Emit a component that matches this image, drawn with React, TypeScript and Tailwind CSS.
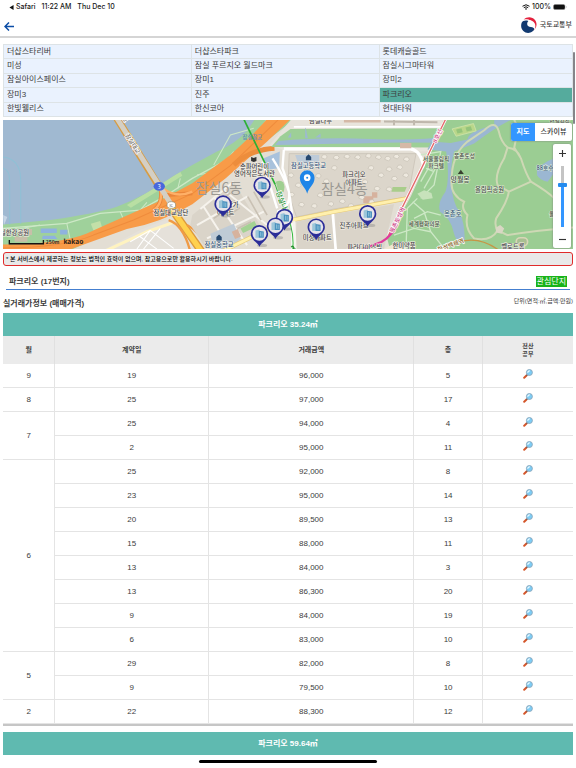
import React from "react";

const complexes = [
  "더샵스타리버", "더샵스타파크", "롯데캐슬골드",
  "미성", "잠실 푸르지오 월드마크", "잠실시그마타워",
  "잠실아이스페이스", "장미1", "장미2",
  "장미3", "진주", "파크리오",
  "한빛웰리스", "한신코아", "현대타워",
];

type Deal = { day: number; price: string; floor: number };

const months: { month: number; deals: Deal[] }[] = [
  { month: 9, deals: [{ day: 19, price: "96,000", floor: 5 }] },
  { month: 8, deals: [{ day: 25, price: "97,000", floor: 17 }] },
  {
    month: 7,
    deals: [
      { day: 25, price: "94,000", floor: 4 },
      { day: 2, price: "95,000", floor: 11 },
    ],
  },
  {
    month: 6,
    deals: [
      { day: 25, price: "92,000", floor: 8 },
      { day: 23, price: "95,000", floor: 14 },
      { day: 20, price: "89,500", floor: 13 },
      { day: 15, price: "88,000", floor: 11 },
      { day: 13, price: "84,000", floor: 3 },
      { day: 13, price: "86,300", floor: 20 },
      { day: 9, price: "84,000", floor: 19 },
      { day: 6, price: "83,000", floor: 10 },
    ],
  },
  {
    month: 5,
    deals: [
      { day: 29, price: "82,000", floor: 8 },
      { day: 9, price: "79,500", floor: 10 },
    ],
  },
  { month: 2, deals: [{ day: 22, price: "88,300", floor: 12 }] },
];

function Magnifier() {
  return (
    <svg viewBox="0 0 20 20" className="h-[10px] w-[10px]" aria-hidden="true">
      <path d="M2.4 17.6 7 13" stroke="#d4562a" strokeWidth="4" strokeLinecap="round" />
      <path d="M7 13 9 11" stroke="#4a5a6a" strokeWidth="2.6" />
      <circle cx="12.8" cy="7" r="6" fill="#7ccdf6" stroke="#8ba6ba" strokeWidth="1.8" />
      <path d="M9.6 7.4a3.8 3.8 0 0 1 4-3.8" stroke="#f2fbff" strokeWidth="2.4" fill="none" />
    </svg>
  );
}

function GovLogo() {
  return (
    <svg viewBox="0 0 48 48" className="h-4 w-4" aria-hidden="true">
      <path d="M8 8C18-2 34-1 42 9c8 11 5 24-5 32 4-7 5-17 0-23-7-10-19-13-29-10Z" fill="#e4213d" />
      <path d="M12 9c12-3 24 1 29 10 4 7 2 16-2 21 1-8-1-13-6-15Z" fill="#fff" />
      <path d="M2 17C5 11 14 9 22 12c-4 4-5 10-1 15 5 5 12 2 17 6 3 3 1 7-3 10-9 7-21 6-28-1C0 35-1 26 2 17Z" fill="#123a70" />
    </svg>
  );
}

function MapPin({ x, y }: { x: number; y: number }) {
  return (
    <g transform={`translate(${x} ${y})`}>
      <ellipse cx="8" cy="34" rx="15" ry="5" fill="#777" opacity=".35" />
      <path d="M0 38C-5 25-26 18-26-1a26 26 0 0 1 52 0C26 18 5 25 0 38Z" fill="#2b2d98" />
      <circle r="21" cy="-1" fill="#e6e4ea" />
      <path d="M-12-11 0-14v25h-12Z" fill="#9cc6da" />
      <path d="m-2-10 15 2v19H-2Z" fill="#4a90bd" />
      <path d="M3-6v13M8-5V8" stroke="#a4d4e5" strokeWidth="2" />
    </g>
  );
}

const houses = [
  [970, 125], [1006, 127], [1038, 124], [1070, 126], [1102, 122], [1132, 126],
  [1000, 158], [1160, 130], [1186, 124], [1216, 132], [1164, 162], [1196, 156],
  [1180, 190], [1214, 180], [870, 180], [892, 210], [872, 238], [902, 268],
  [952, 182], [976, 198], [958, 240], [990, 266], [1024, 258], [1050, 272],
  [1082, 246], [1112, 260], [1128, 220], [1140, 180], [1110, 158], [1164, 222],
  [940, 272], [918, 168], [1092, 200],
];

function MapDrawing() {
  return (
    <svg
      viewBox="9 15 1707 387"
      preserveAspectRatio="xMidYMid slice"
      className="block h-[129px] w-full font-['Noto_Sans_CJK_KR',sans-serif]"
      role="img"
      aria-label="잠실 지도"
    >
      <rect x="0" y="0" width="1730" height="410" fill="#e3ded4" />

      {/* riverside park */}
      <path d="M0 320 250 290 350 265 480 205 600 120 760 0H900L600 230 200 410H0Z" fill="#9fd19b" />
      <path d="M380 270 540 170 546 182 392 278Z" fill="#b9dfa3" />
      {/* river */}
      <path d="M0 0H772L738 50Q700 90 650 110L576 150 520 182Q430 245 350 275 290 295 150 315L0 329Z" fill="#a0b9d1" />
      <path d="M9 126q53 6 53 70v130M9 160q20 4 20 40v128" fill="none" stroke="#8fc0d5" strokeWidth="3" />
      <path d="M9 300 22 306 12 330" fill="#c5d5e5" />
      <path d="M9 340 200 325 300 295 420 285 500 240 576 190 660 145 730 100 800 15" fill="none" stroke="#cde8c6" strokeWidth="4" />
      <path d="M0 352 120 330M200 325 210 372M360 290 372 318M420 285 440 262M540 190 532 222M640 150 690 60 760 40M590 180 650 170 700 110" fill="none" stroke="#cde8c6" strokeWidth="3" />
      <path d="M122 340h48v14h-48ZM180 344h22v14h-22ZM128 362h36l8 10h-46Z" fill="#8fb2df" />
      <path d="M272 326 300 318 306 338 280 346Z" fill="#c3e0a8" />
      <path d="M56 342h40v18H56ZM44 364h38v16H44Z" fill="#c7bfa9" />

      {/* city blocks south of the expressway */}
      <path d="M300 410 420 345 530 300 610 410Z" fill="#e5e1da" />
      <path d="M310 410 440 350 520 322" fill="none" stroke="#fff3c0" strokeWidth="9" />
      <path d="M390 380 450 346 520 400M420 365 470 402M450 346 410 402M480 340 430 402" stroke="#fff" strokeWidth="3" fill="none" />

      {/* expressway */}
      <path d="M0 388Q180 388 260 355 350 315 470 262L576 205 690 120 760 55 812 0H884L800 80 676 190 576 268Q480 325 380 342L190 410H0Z" fill="#f89b48" />
      <path d="M0 399Q190 398 280 360L400 315 576 236 690 152 840 8" fill="none" stroke="#ef8b3c" strokeWidth="3" />
      <path d="M480 215Q490 265 460 285M500 240 576 235" fill="none" stroke="#e9853a" strokeWidth="12" />
      <path d="M480 215Q490 265 460 285M490 222Q530 250 576 230" fill="none" stroke="#ffb067" strokeWidth="7" />
      <path d="M700 150Q750 104 822 100" fill="none" stroke="#ed8d3c" strokeWidth="15" />

      {/* bridge */}
      <path d="M350 10 480 220" stroke="#d79c42" strokeWidth="22" />
      <path d="M350 10 520 280" stroke="#d4cfc4" strokeWidth="15" />
      <path d="M510 275 604 410" stroke="#dd9a3a" strokeWidth="24" />
      <path d="M510 275 604 410" stroke="#ffd14f" strokeWidth="16" />
      <path d="M505 315Q550 330 570 410M560 330Q600 350 626 410" stroke="#f09a45" strokeWidth="7" fill="none" />

      {/* northern strip with stream */}
      <path d="M884 0H1340V110L860 108 828 98 806 92Z" fill="#e8e4dc" />
      <path d="M870 42 1340 40V98L812 96 840 64Z" fill="#9dcf97" />
      <path d="M834 78Q960 66 1110 72T1340 64V84Q1200 82 1120 84T824 90Z" fill="#9db9d2" />
      <path d="m862 68 10-16v16ZM914 70V32l8 38ZM944 68l16-12v12Z" fill="#9db9d2" />
      <path d="M850 102H1230Q1262 108 1270 160" fill="none" stroke="#fff" strokeWidth="10" />
      <path d="M880 36H1320" stroke="#fff" strokeWidth="5" />
      <path d="M1198 84h34v16h-34ZM1030 15h110v8h-110Z" fill="#d5b9a7" />
      <path d="M1150 20 1310 22M1180 15v16M1240 15v16" stroke="#bfb7ac" strokeWidth="6" />

      {/* residential blocks */}
      <path d="M866 116H1246L1222 245 1000 282 888 306 862 230Z" fill="#dcd6cb" stroke="#c5beb2" strokeWidth="2" />
      <path d="M884 120h72v34h-60Z" fill="#bdcbd9" />
      <path d="M790 130 838 110 836 160 798 164Z" fill="#a8c2dc" />
      <path d="M1088 244h30v20h-30ZM1114 232h16v16h-16Z" fill="#d6b29e" />
      <path d="M1176 216h42l-6 14h-40Z" fill="#a9cd8b" />
      {houses.map(([x, y]) => (
        <path key={`${x}-${y}`} d={`M${x - 8} ${y + 3}l4-8 9-1 5 7-6 7Z`} fill="#eee9df" stroke="#c6bfb3" strokeWidth="2" />
      ))}
      <path d="M576 300 700 200 790 350 650 410H624L570 330Z" fill="#dad4c9" />
      <path d="M640 245 740 390M610 275 690 400M670 225 800 330M590 330 740 245M620 370 790 290M700 200 600 282" stroke="#f6f3ed" strokeWidth="6" fill="none" />
      <path d="M650 262l40-28M664 284l40-28M678 306l40-28M760 230l40 70M742 245l40 70M712 340l40-20M640 310l30-20" stroke="#c9c1b4" strokeWidth="5" />
      <path d="M720 340 762 318 770 334 728 354Z" fill="#a3d293" />
      <path d="M630 356 700 326 720 370 690 402H640Z" fill="#bfcbd6" />
      <path d="M694 350 712 342 722 364 704 372Z" fill="#d6b29e" />
      <path d="M826 200Q850 190 852 216L850 230 834 232Z" fill="#a0cf91" />
      <path d="M816 130Q860 200 866 236 868 280 830 290M850 105 846 160Q866 210 876 310V410M786 140 830 280" fill="none" stroke="#fff" strokeWidth="7" />
      <path d="M888 320 1000 296V410H884ZM1004 296 1180 268 1148 410H1004Z" fill="#dad4c9" />
      <path d="M996 290 1006 410" stroke="#fff" strokeWidth="8" />
      <path d="M650 416 790 348 880 314 1000 290 1220 250" fill="none" stroke="#e5c978" strokeWidth="13" />
      <path d="M650 416 790 348 880 314 1000 290 1220 250" fill="none" stroke="#fff0ad" strokeWidth="9" />
      <path d="M880 318 884 410" stroke="#f6f3ed" strokeWidth="9" />

      {/* Olympic park */}
      <path d="M1334 0H1730V410H1170L1160 372 1230 245 1276 145Z" fill="#9bcd93" />
      <path d="M1292 80 1350 84 1400 74Q1400 50 1480 30V15H1530Q1480 40 1420 86L1360 110Q1348 150 1352 210 1356 265 1376 290 1392 320 1392 384 1366 386 1358 350 1350 310 1318 290 1308 265 1334 230 1348 190 1336 110L1280 104Z" fill="#9bb7d2" />
      <path d="M1608 160Q1650 130 1670 128V160L1640 200Q1616 196 1608 180Z" fill="#9bb7d2" />
      <path d="m1354 42 64-16 8 22-60 16Z" fill="#b9d78a" stroke="#d8e7b0" strokeWidth="2" />
      <path d="m1366 44 16-4 4 12-16 4ZM1394 38l16-4 4 12-16 4Z" fill="#94c47b" />
      <path d="M1352 200Q1352 120 1400 80L1450 46Q1484 12 1494 50 1500 80 1520 98 1550 100 1560 130 1576 180 1590 200 1640 230 1660 250M1520 98 1510 130Q1480 180 1490 210L1524 230 1590 200M1524 230Q1520 260 1486 310 1480 330 1490 346M1352 200Q1350 240 1390 260 1380 280 1400 300 1390 340 1420 370 1470 380 1490 346L1520 360Q1600 346 1730 336M1560 130 1540 98 1552 40 1540 15" fill="none" stroke="#ced8b5" strokeWidth="6" />
      <path d="M1236 260 1270 290 1290 350 1330 400M1250 250 1220 280 1216 400M1260 120 1320 110 1300 210 1260 250M1276 160 1300 170M1240 310 1280 290 1320 300M1180 360 1240 340 1290 350M1300 130 1260 200M1310 150 1270 220" fill="none" stroke="#cde8c6" strokeWidth="4" />
      <path d="m1250 236 20-10 22 8 4 16-30 4Z" fill="#c7e2bb" />
      <path d="m1484 338 14-8 12 10-8 16-16-4Z" fill="#d9d7c4" />
      <rect x="1546" y="368" width="34" height="24" rx="12" fill="#a9bf92" stroke="#d8d6b8" strokeWidth="5" />
      <path d="M1376 380Q1440 362 1500 410" fill="none" stroke="#c69645" strokeWidth="4" />
      <path d="M1152 400 1190 380 1230 410H1150Z" fill="#eee6d0" />

      {/* subway lines */}
      <path d="M1336 10 1218 250 1164 360" fill="none" stroke="#fff" strokeWidth="9" />
      <path d="M1336 10 1218 250 1164 360" fill="none" stroke="#e5686b" strokeWidth="4" />
      <path d="M1188 320Q1180 360 1140 382L1080 405" fill="none" stroke="#df3a9c" strokeWidth="7" />
      <path d="M724 0 824 208" stroke="#2bb135" strokeWidth="5" />
      <path d="M824 208 852 290Q884 340 876 410" stroke="#35b83e" strokeWidth="3" fill="none" />

      {/* district names */}
      <g fill="#9b9993" fontSize="42">
        <text x="586" y="233">잠실6동</text>
        <text x="962" y="238">잠실4동</text>
      </g>

      {/* places */}
      <g fill="#3f3f46" stroke="#f5f1e8" strokeWidth="3" paintOrder="stroke" fontSize="19" fontWeight="500" textAnchor="middle">
        <text x="87" y="360" textAnchor="end">잠실한강공원</text>
        <text x="512" y="301">잠실대교남단</text>
        <text x="762" y="161">송파어린이</text>
        <text x="762" y="184">영어작은도서관</text>
        <text x="680" y="276">미성상가</text>
        <text x="676" y="300">아파트</text>
        <text x="656" y="396" fill="#34577f">잠실중학교</text>
        <text x="924" y="158" fill="#34577f">잠실고등학교</text>
        <text x="1060" y="187">파크리오</text>
        <text x="1060" y="210">아파트</text>
        <text x="1060" y="340">진주아파트</text>
        <text x="950" y="374">미성아파트</text>
        <text x="1092" y="406">파라다이스빌</text>
        <text x="960" y="25">잠실나루</text>
        <text x="1210" y="400">한미약품</text>
        <text x="1536" y="402">벨로드롬</text>
      </g>
      <g fill="#3f4a40" stroke="#e4efd9" strokeWidth="3" paintOrder="stroke" fontSize="17" fontWeight="500" textAnchor="middle">
        <text x="1306" y="137">서울올림픽</text>
        <text x="1306" y="158">파크텔</text>
        <text x="1391" y="130">몽촌토성</text>
        <text x="1378" y="200" fontSize="21">망월봉</text>
        <text x="1466" y="232" fontSize="19">올림픽공원</text>
        <text x="1356" y="304" fontSize="19" fill="#34577f">몽촌호</text>
        <text x="1270" y="334">세계평화의문</text>
        <text x="1632" y="166" fill="#34577f">88호수</text>
        <text x="1676" y="302">올림픽홀</text>
        <text x="1676" y="24">한얼광장</text>
      </g>
      <g stroke="#fff" strokeWidth="4" paintOrder="stroke" fontSize="18" textAnchor="middle" fontWeight="500">
        <text transform="translate(392 90) rotate(58)" fill="#74706a">잠실대교</text>
        <text transform="translate(368 16) rotate(58)" fill="#74706a">교</text>
        <text transform="translate(840 268) rotate(68)" fill="#238f2d" fontSize="21">잠실나루</text>
        <text transform="translate(1196 318) rotate(-64)" fill="#c93482">몽촌토성역</text>
        <text transform="translate(1316 66) rotate(-64)" fill="#d2508c">8호선</text>
        <text transform="translate(1352 396) rotate(-20)" fill="#8c681f">한성백제역</text>
        <text x="756" y="72" fill="#648db8" stroke="none" fontSize="16">잠실철교</text>
      </g>
      <path d="M872 396q6-6 8 2-2 6 6 4" stroke="#238f2d" strokeWidth="4" fill="none" />
      <path d="m1380 164 9 13h-18Z" fill="#38402f" />
      <path d="m924 118 8 8v10h-16v-10ZM656 358l8 8v10h-16v-10Z" fill="#26486f" />
      <path d="m752 126 8 3 8-3v12l-8 3-8-3Z" fill="#333" />

      {/* route shields */}
      <ellipse cx="477" cy="214" rx="17" ry="13" fill="#4968dc" />
      <text x="477" y="221" fill="#fff" fontSize="18" textAnchor="middle">3</text>
      <ellipse cx="513" cy="270" rx="13" ry="10" fill="#fff" stroke="#8a8a72" strokeWidth="2" />
      <text x="513" y="275" fill="#555" fontSize="12" textAnchor="middle">IC</text>

      {/* complexes */}
      <MapPin x={785} y={212} />
      <MapPin x={668} y={268} />
      <MapPin x={852} y={308} />
      <MapPin x={825} y={334} />
      <MapPin x={777} y={357} />
      <MapPin x={947} y={337} />
      <MapPin x={1101} y={297} />
      <path d="M920 236C916 216 898 210 898 188a22 22 0 0 1 44 0c0 22-18 28-22 48Z" fill="#1e85e8" />
      <circle cx="920" cy="188" r="10" fill="#fff" />
      <circle cx="920" cy="188" r="3" fill="#1e85e8" />

      {/* scale bar */}
      <path d="M28 375V386H130V375" fill="none" stroke="#141414" strokeWidth="4" />
      <text x="137" y="386" fontSize="15" fontWeight="700" fill="#333">250m</text>
      <text x="190" y="387" fontSize="20" fontWeight="700" fill="#2b2118">kakao</text>
    </svg>
  );
}

function MapView() {
  return (
    <section className="relative mt-[3px] overflow-hidden">
      <MapDrawing />
      <div className="absolute top-[3px] right-[1px] flex h-[18px] w-[61px] overflow-hidden rounded-[2px] bg-white text-[7px] leading-[18px] font-medium shadow-[0_0_2px_#777]">
        <button className="w-6 bg-[#3396ff] font-bold text-white">지도</button>
        <button className="flex-1 whitespace-nowrap text-[#333]">스카이뷰</button>
      </div>
      <div className="absolute top-6 right-[2px] flex h-[104px] w-[18px] flex-col items-center justify-between rounded-[2px] bg-white shadow-[0_0_2px_#777]">
        <button aria-label="확대" className="flex h-[18px] w-full items-center justify-center">
          <svg viewBox="0 0 8 8" className="h-[7px] w-[7px]"><path d="M4 0v8M0 4h8" stroke="#333" strokeWidth="1.3" /></svg>
        </button>
        <input
          type="range"
          aria-label="지도 확대 수준"
          min="0"
          max="100"
          defaultValue="70"
          className="h-[61px] w-[9px] appearance-none bg-[linear-gradient(to_bottom,#c4c4c4_31%,#3396ff_31%)] bg-[length:3px_100%] bg-center bg-no-repeat [direction:rtl] [writing-mode:vertical-lr] [&::-webkit-slider-thumb]:h-[4px] [&::-webkit-slider-thumb]:w-[9px] [&::-webkit-slider-thumb]:appearance-none [&::-webkit-slider-thumb]:rounded-[1px] [&::-webkit-slider-thumb]:bg-[#258bee]"
        />
        <button aria-label="축소" className="flex h-[18px] w-full items-center justify-center">
          <svg viewBox="0 0 8 8" className="h-[7px] w-[7px]"><path d="M0 4h8" stroke="#333" strokeWidth="1.3" /></svg>
        </button>
      </div>
    </section>
  );
}

function StatusBar() {
  return (
    <div className="flex h-[14px] items-center justify-between pr-[9px] pl-[9px] font-['Inter',sans-serif] text-[7px] leading-[14px] font-medium text-[#171717]">
      <div className="flex items-center">
        <svg viewBox="0 0 5 6" className="mr-[2px] h-[5px] w-[5px]"><path d="M0 3 5 0v6Z" fill="#111" /></svg>
        <span>Safari</span>
        <span className="ml-[6px]">11:22 AM</span>
        <span className="ml-[6px]">Thu Dec 10</span>
      </div>
      <div className="flex items-center gap-[2px]">
        <svg viewBox="0 0 16 12" className="h-[6px] w-2">
          <path d="M1 4.5Q8-1.5 15 4.5M3.6 7.4q4.4-3.6 8.8 0" fill="none" stroke="#111" strokeWidth="2" />
          <path d="M5.8 9.3q2.2-1.8 4.4 0L8 12Z" fill="#111" />
        </svg>
        <span>100%</span>
        <svg viewBox="0 0 28 12" className="h-[6px] w-[14px]">
          <rect x="1" y="1" width="23" height="10" rx="3" fill="#111" stroke="#888" />
          <path d="M26 4v4q2-2 0-4Z" fill="#888" />
        </svg>
      </div>
    </div>
  );
}

const areaTitle = "h-[23px] w-full bg-[#5fbab0] text-center text-[8px] leading-[23px] font-bold text-white";

function DealTable() {
  const cell = "h-6 border-b border-l border-[#e4e4e4] p-0 text-center";
  return (
    <table className="w-full table-fixed border-separate border-spacing-0 border-b-2 border-[#c6c6c6] text-[8px] leading-3 text-[#3d3d3d]">
      <caption className={areaTitle}>파크리오 35.24㎡</caption>
      <colgroup>
        <col className="w-[9%]" />
        <col className="w-[27%]" />
        <col className="w-[36%]" />
        <col className="w-[12%]" />
        <col className="w-[16%]" />
      </colgroup>
      <thead>
        <tr className="bg-[#ebebeb]">
          <th className="h-7 p-0 text-[7px] font-bold">월</th>
          <th className="border-l border-[#e0e0e0] p-0 text-[7px] font-bold">계약일</th>
          <th className="border-l border-[#e0e0e0] p-0 text-[7px] font-bold">거래금액</th>
          <th className="border-l border-[#e0e0e0] p-0 text-[7px] font-bold">층</th>
          <th className="border-l border-[#e0e0e0] p-0 text-[6px] leading-2 font-bold">전산<br />공부</th>
        </tr>
      </thead>
      <tbody>
        {months.map(({ month, deals }) =>
          deals.map((deal, i) => (
            <tr key={`${month}-${i}`}>
              {i === 0 && (
                <td rowSpan={deals.length} className="h-6 border-b border-[#e4e4e4] p-0 text-center">{month}</td>
              )}
              <td className={cell}>{deal.day}</td>
              <td className={cell}>{deal.price}</td>
              <td className={cell}>{deal.floor}</td>
              <td className={cell}>
                <button aria-label="전산공부 보기" className="block w-full pb-[3px]">
                  <span className="flex justify-center"><Magnifier /></span>
                </button>
              </td>
            </tr>
          )),
        )}
      </tbody>
    </table>
  );
}

export default function App() {
  return (
    <div className="relative min-h-screen overflow-hidden bg-white font-['Liberation_Sans','Noto_Sans_CJK_KR',sans-serif] text-[#3d3d3d]">
      <StatusBar />
      <header className="flex h-6 items-center justify-between border-b-2 border-[#d5d5d5] px-1">
        <button aria-label="뒤로" className="pt-[3px]">
          <svg viewBox="0 0 20 18" className="h-[9px] w-[10px]">
            <path d="M20 9H2M10 1 2 9l8 8" fill="none" stroke="#0b4da6" strokeWidth="3" />
          </svg>
        </button>
        <div className="flex items-center gap-[3px] text-[7px] leading-4 font-medium">
          <GovLogo />
          <span className="whitespace-nowrap">국토교통부</span>
        </div>
      </header>

      <main className="px-[3px] pt-[6px]">
        <div className="relative">
          <ul className="grid h-[73px] grid-cols-[33fr_33fr_34fr] grid-rows-5 border-t border-l border-[#dde3e6]">
            {complexes.map((name) => (
              <li
                key={name}
                className={
                  name === "파크리오"
                    ? "flex border-r border-b border-[#dde3e6] bg-[#55ab9d]"
                    : "flex border-r border-b border-[#dde3e6] bg-[#eaf2fe]"
                }
              >
                <button className="w-full px-[3px] text-left text-[8px] leading-3 whitespace-nowrap">{name}</button>
              </li>
            ))}
          </ul>
          <div className="absolute top-2 -right-[2px] h-[72px] w-[2px] rounded bg-[#85858a]" />
        </div>

        <MapView />

        <p className="mt-[3px] h-[14px] rounded-[3px] border border-[#e02b2b] bg-[#e9e9e9] px-[2px] text-[6px] leading-3 font-medium whitespace-nowrap text-black">
          * 본 서비스에서 제공하는 정보는 법적인 효력이 없으며, 참고용으로만 활용하시기 바랍니다.
        </p>

        <div className="mx-[3px] mt-2 flex h-4 items-center justify-between border-b border-[#447fd0] px-[3px]">
          <h1 className="text-[8px] font-bold">파크리오 (17번지)</h1>
          <button className="h-[11px] bg-[#19b319] px-px text-[8px] leading-[11px] text-white">관심단지</button>
        </div>

        <div className="flex h-[23px] items-center justify-between pt-[5px]">
          <h2 className="text-[8px] font-bold">실거래가정보 (매매가격)</h2>
          <span className="self-start text-[6px] leading-3">단위(면적:㎡,금액:만원)</span>
        </div>

        <DealTable />

        <h3 className={`mt-[6px] ${areaTitle}`}>파크리오 59.64㎡</h3>
      </main>
      <div className="mx-auto mt-[5px] h-[3px] w-[31%] rounded-full bg-black" />
    </div>
  );
}
